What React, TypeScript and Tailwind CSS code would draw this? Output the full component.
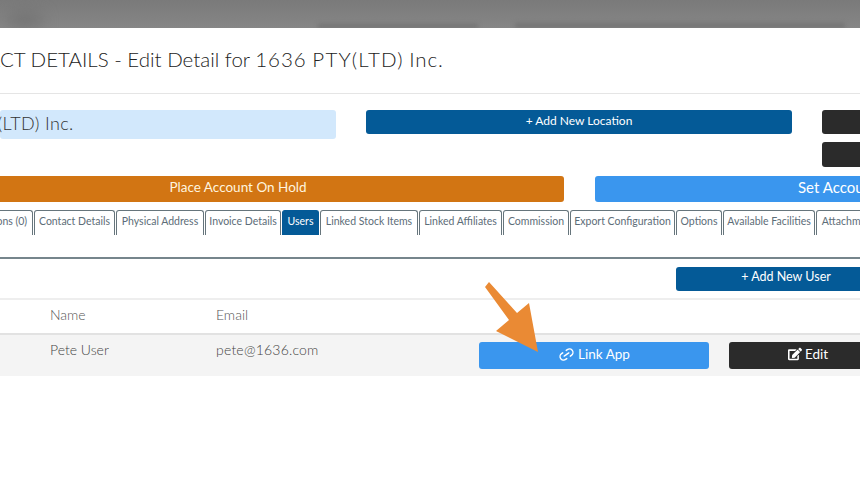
import { Link2 } from 'lucide-react';
import { FaEdit } from 'react-icons/fa';

const tabs = [
  { label: 'Locations (0)', width: 'w-[70px] -ml-[37px]' },
  { label: 'Contact Details', width: 'w-[81px]' },
  { label: 'Physical Address', width: 'w-[88px]' },
  { label: 'Invoice Details', width: 'w-[76px]' },
  { label: 'Users', width: 'w-[37px]', active: true },
  { label: 'Linked Stock Items', width: 'w-[98px]' },
  { label: 'Linked Affiliates', width: 'w-[83px]' },
  { label: 'Commission', width: 'w-[66px]' },
  { label: 'Export Configuration', width: 'w-[105px]' },
  { label: 'Options', width: 'w-[46px]' },
  { label: 'Available Facilities', width: 'w-[92px]' },
  { label: 'Attachments', width: 'w-[70px]' },
];

export default function App() {
  return (
    <div className="relative h-[481px] w-[860px] overflow-hidden bg-white font-['Lato',sans-serif] font-light text-[#555]">
      {/* Dimmed page behind the modal */}
      <div className="relative h-[28px] overflow-hidden bg-gradient-to-b from-[#7a7a7a] to-[#868686]">
        <div className="absolute left-[8px] top-[14px] h-[12px] w-[34px] rounded-full bg-[#6f6f6f] blur-sm" />
        <div className="absolute left-[318px] top-[24px] h-[4px] w-[160px] bg-[#727272] blur-[2px]" />
        <div className="absolute left-[515px] top-[23px] h-[5px] w-[330px] bg-[#747474] blur-[2px]" />
      </div>

      {/* Modal title */}
      <div className="flex h-[66px] items-center overflow-hidden border-b border-[#e5e5e5]">
        <h1 className="-ml-[69px] -mt-[3px] whitespace-nowrap text-[20.5px] text-[#222]">
          CONTACT DETAILS - Edit Detail for <span className="tracking-[1px]">1636</span>{' '}
          <span className="tracking-[1.2px]">PTY(LTD)</span> <span className="tracking-[0.8px]">Inc.</span>
        </h1>
      </div>

      {/* Name + location actions */}
      <div className="flex gap-[30px] pt-[16px]">
        <div className="flex h-[29px] w-[336px] shrink-0 items-center overflow-hidden rounded-[3px] bg-[#d2e8fc]">
          <span className="-ml-[84px] -mt-[2px] whitespace-nowrap text-[18px] tracking-[0.4px] text-[#333]">1636 PTY(LTD) Inc.</span>
        </div>
        <button className="flex h-[24px] w-[426px] shrink-0 items-center justify-center rounded-[3px] bg-[#045a97] pb-[3px] text-[12px] font-normal text-white">
          + Add New Location
        </button>
        <div className="flex w-[100px] shrink-0 flex-col gap-[8px]">
          <div className="h-[24px] rounded-[3px] bg-[#2b2b2b]" />
          <div className="h-[25px] rounded-[3px] bg-[#2b2b2b]" />
        </div>
      </div>

      {/* Account buttons */}
      <div className="mt-[9px] flex gap-[31px]">
        <button className="flex h-[26px] w-[564px] shrink-0 items-center justify-center rounded-r-[3px] bg-[#d27513] pb-[3px] pr-[88px] text-[13.5px] font-normal text-[#fff4df]">
          Place Account On Hold
        </button>
        <button className="flex h-[26px] w-[420px] shrink-0 items-center rounded-[3px] bg-[#3a96ee] pb-[3px] pl-[203px] text-[15px] font-normal text-white">
          Set Account
        </button>
      </div>

      {/* Tabs */}
      <div className="mt-[8px] flex h-[49px] gap-[1px] border-b-2 border-[#76858c]">
        {tabs.map((tab) => (
          <div
            key={tab.label}
            className={`flex h-[25px] shrink-0 items-center justify-center whitespace-nowrap rounded-t-[3px] border border-b-0 pb-[2px] text-[10.5px] font-normal ${tab.width} ${
              tab.active ? 'border-[#045a97] bg-[#045a97] text-white' : 'border-[#66757c] bg-white text-[#5d6d78]'
            }`}
          >
            {tab.label}
          </div>
        ))}
      </div>

      {/* Users panel */}
      <div className="flex justify-end pt-[8px]">
        <button className="-mr-[36px] flex h-[24px] w-[220px] shrink-0 items-center justify-center rounded-[3px] bg-[#045a97] pb-[3px] text-[12.5px] font-normal text-white">
          + Add New User
        </button>
      </div>

      <div className="mt-[7px] flex h-[35px] items-center border-t-2 border-[#eeeeee] pb-[5px] pl-[50px] text-[14px] text-[#555]">
        <span className="w-[166px] shrink-0">Name</span>
        <span>Email</span>
      </div>
      <div className="flex h-[43px] items-center border-t-2 border-[#e2e2e2] bg-[#f4f4f4] pl-[50px] text-[14px] text-[#444]">
        <span className="-mt-[13px] w-[166px] shrink-0">Pete User</span>
        <span className="-mt-[13px] w-[263px] shrink-0 tracking-[0.2px]">pete@1636.com</span>
        <button className="flex h-[27px] w-[230px] shrink-0 items-center justify-center gap-[3px] rounded-[3px] bg-[#3a96ee] pb-[3px] text-[13.5px] font-normal text-white">
          <Link2 className="-rotate-[35deg]" size={17} />
          Link App
        </button>
        <button className="ml-[20px] flex h-[27px] w-[190px] shrink-0 items-center justify-center gap-[3px] rounded-[3px] bg-[#2b2b2b] pb-[3px] pr-[32px] text-[13.5px] font-normal text-white">
          <FaEdit size={14} />
          Edit
        </button>
      </div>

      {/* Callout arrow */}
      <svg className="absolute left-[484px] top-[281px]" width="56" height="72" viewBox="0 0 56 72">
        <path d="M5 1 L1 6 L25 39 L12 50 L54 71 L45 22 L33 32 Z" fill="#ea8a34" />
      </svg>
    </div>
  );
}
